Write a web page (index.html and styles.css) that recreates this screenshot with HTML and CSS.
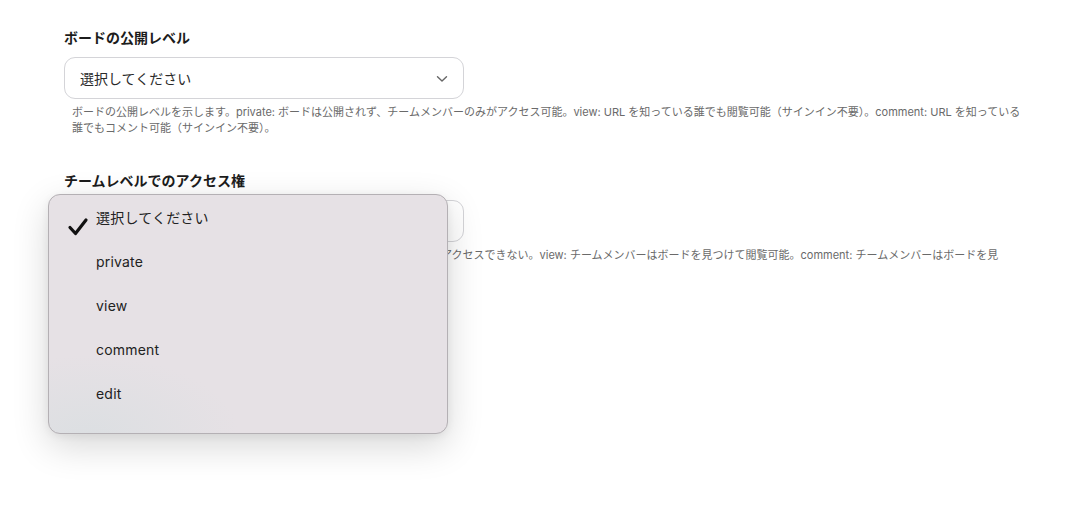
FILE: index.html
```html
<!DOCTYPE html>
<html lang="ja">
<head>
    <meta charset="UTF-8">
    <meta name="viewport" content="width=device-width, initial-scale=1.0">
    <title>ボード設定</title>
    <link rel="stylesheet" href="styles.css">
</head>
<body>
    <div class="container">
        <div class="field">
            <label class="field-label">ボードの公開レベル</label>
            <div class="select">
                <span class="select-value">選択してください</span>
                <svg class="chevron" width="12" height="8" viewBox="0 0 12 8">
                    <path d="M1.5 1.8 L6 6 L10.5 1.8" fill="none" stroke="#666" stroke-width="1.4" stroke-linecap="round" stroke-linejoin="round"/>
                </svg>
            </div>
            <p class="help">ボードの公開レベルを示します。private: ボードは公開されず、チームメンバーのみがアクセス可能。view: URL を知っている誰でも閲覧可能（サインイン不要）。comment: URL を知っている<br>誰でもコメント可能（サインイン不要）。</p>
        </div>

        <div class="field field-second">
            <label class="field-label">チームレベルでのアクセス権</label>
            <div class="select">
                <span class="select-value">選択してください</span>
                <svg class="chevron" width="12" height="8" viewBox="0 0 12 8">
                    <path d="M1.5 1.8 L6 6 L10.5 1.8" fill="none" stroke="#666" stroke-width="1.4" stroke-linecap="round" stroke-linejoin="round"/>
                </svg>
            </div>
            <p class="help">チームのアクセス権を示します。private: チームメンバーは見つけられず、アクセスできない。view: チームメンバーはボードを見つけて閲覧可能。comment: チームメンバーはボードを見<br>つけてコメント可能。</p>
        </div>

        <ul class="menu">
            <li class="menu-item selected">
                <svg class="check" width="22" height="20" viewBox="0 0 22 20">
                    <path d="M3 10.5 L8.5 16.5 L19 3" fill="none" stroke="#111" stroke-width="3.2" stroke-linecap="round" stroke-linejoin="round"/>
                </svg>
                <span>選択してください</span>
            </li>
            <li class="menu-item"><span>private</span></li>
            <li class="menu-item"><span>view</span></li>
            <li class="menu-item"><span>comment</span></li>
            <li class="menu-item"><span>edit</span></li>
        </ul>
    </div>
</body>
</html>
```

FILE: styles.css
```css
body {
    margin: 0;
    padding: 0;
    background: #ffffff;
    font-family: "Inter", "Noto Sans CJK JP", sans-serif;
    color: #1f1f1f;
}

.container {
    position: relative;
    padding: 28px 0 0 64px;
    height: 496px;
}

.field {
    display: flex;
    flex-direction: column;
}

.field-second {
    margin-top: 35px;
}

.field-label {
    font-size: 14px;
    font-weight: 700;
    line-height: 20px;
    color: #1c1c1c;
    margin-bottom: 9px;
}

.select {
    width: 400px;
    height: 42px;
    box-sizing: border-box;
    border: 1px solid #d4d4d8;
    border-radius: 11px;
    display: flex;
    align-items: center;
    justify-content: space-between;
    padding: 0 15px 0 15px;
}

.select-value {
    font-size: 14px;
    color: #2a2a2a;
}

.chevron {
    margin-top: 2px;
}

.help {
    margin: 5px 0 0 0;
    padding-left: 8px;
    font-size: 11px;
    line-height: 16px;
    color: #6a6a6a;
    white-space: nowrap;
}

.menu {
    position: absolute;
    left: 48px;
    top: 194px;
    width: 400px;
    height: 240px;
    box-sizing: border-box;
    margin: 0;
    padding: 0;
    list-style: none;
    border: 1px solid #b4b0b4;
    border-radius: 12px;
    background: radial-gradient(ellipse 150px 80px at 40px 240px, #dcdfe2, rgba(230, 225, 229, 0) 100%), #e6e1e5;
    box-shadow: 0 12px 36px rgba(0, 0, 0, 0.16), 0 2px 8px rgba(0, 0, 0, 0.06);
}

.menu-item {
    height: 44px;
    display: flex;
    align-items: center;
    position: relative;
    padding-left: 47px;
    font-size: 14px;
    color: #222;
    letter-spacing: 0.2px;
}

.check {
    position: absolute;
    left: 18px;
    top: 22px;
}
```
